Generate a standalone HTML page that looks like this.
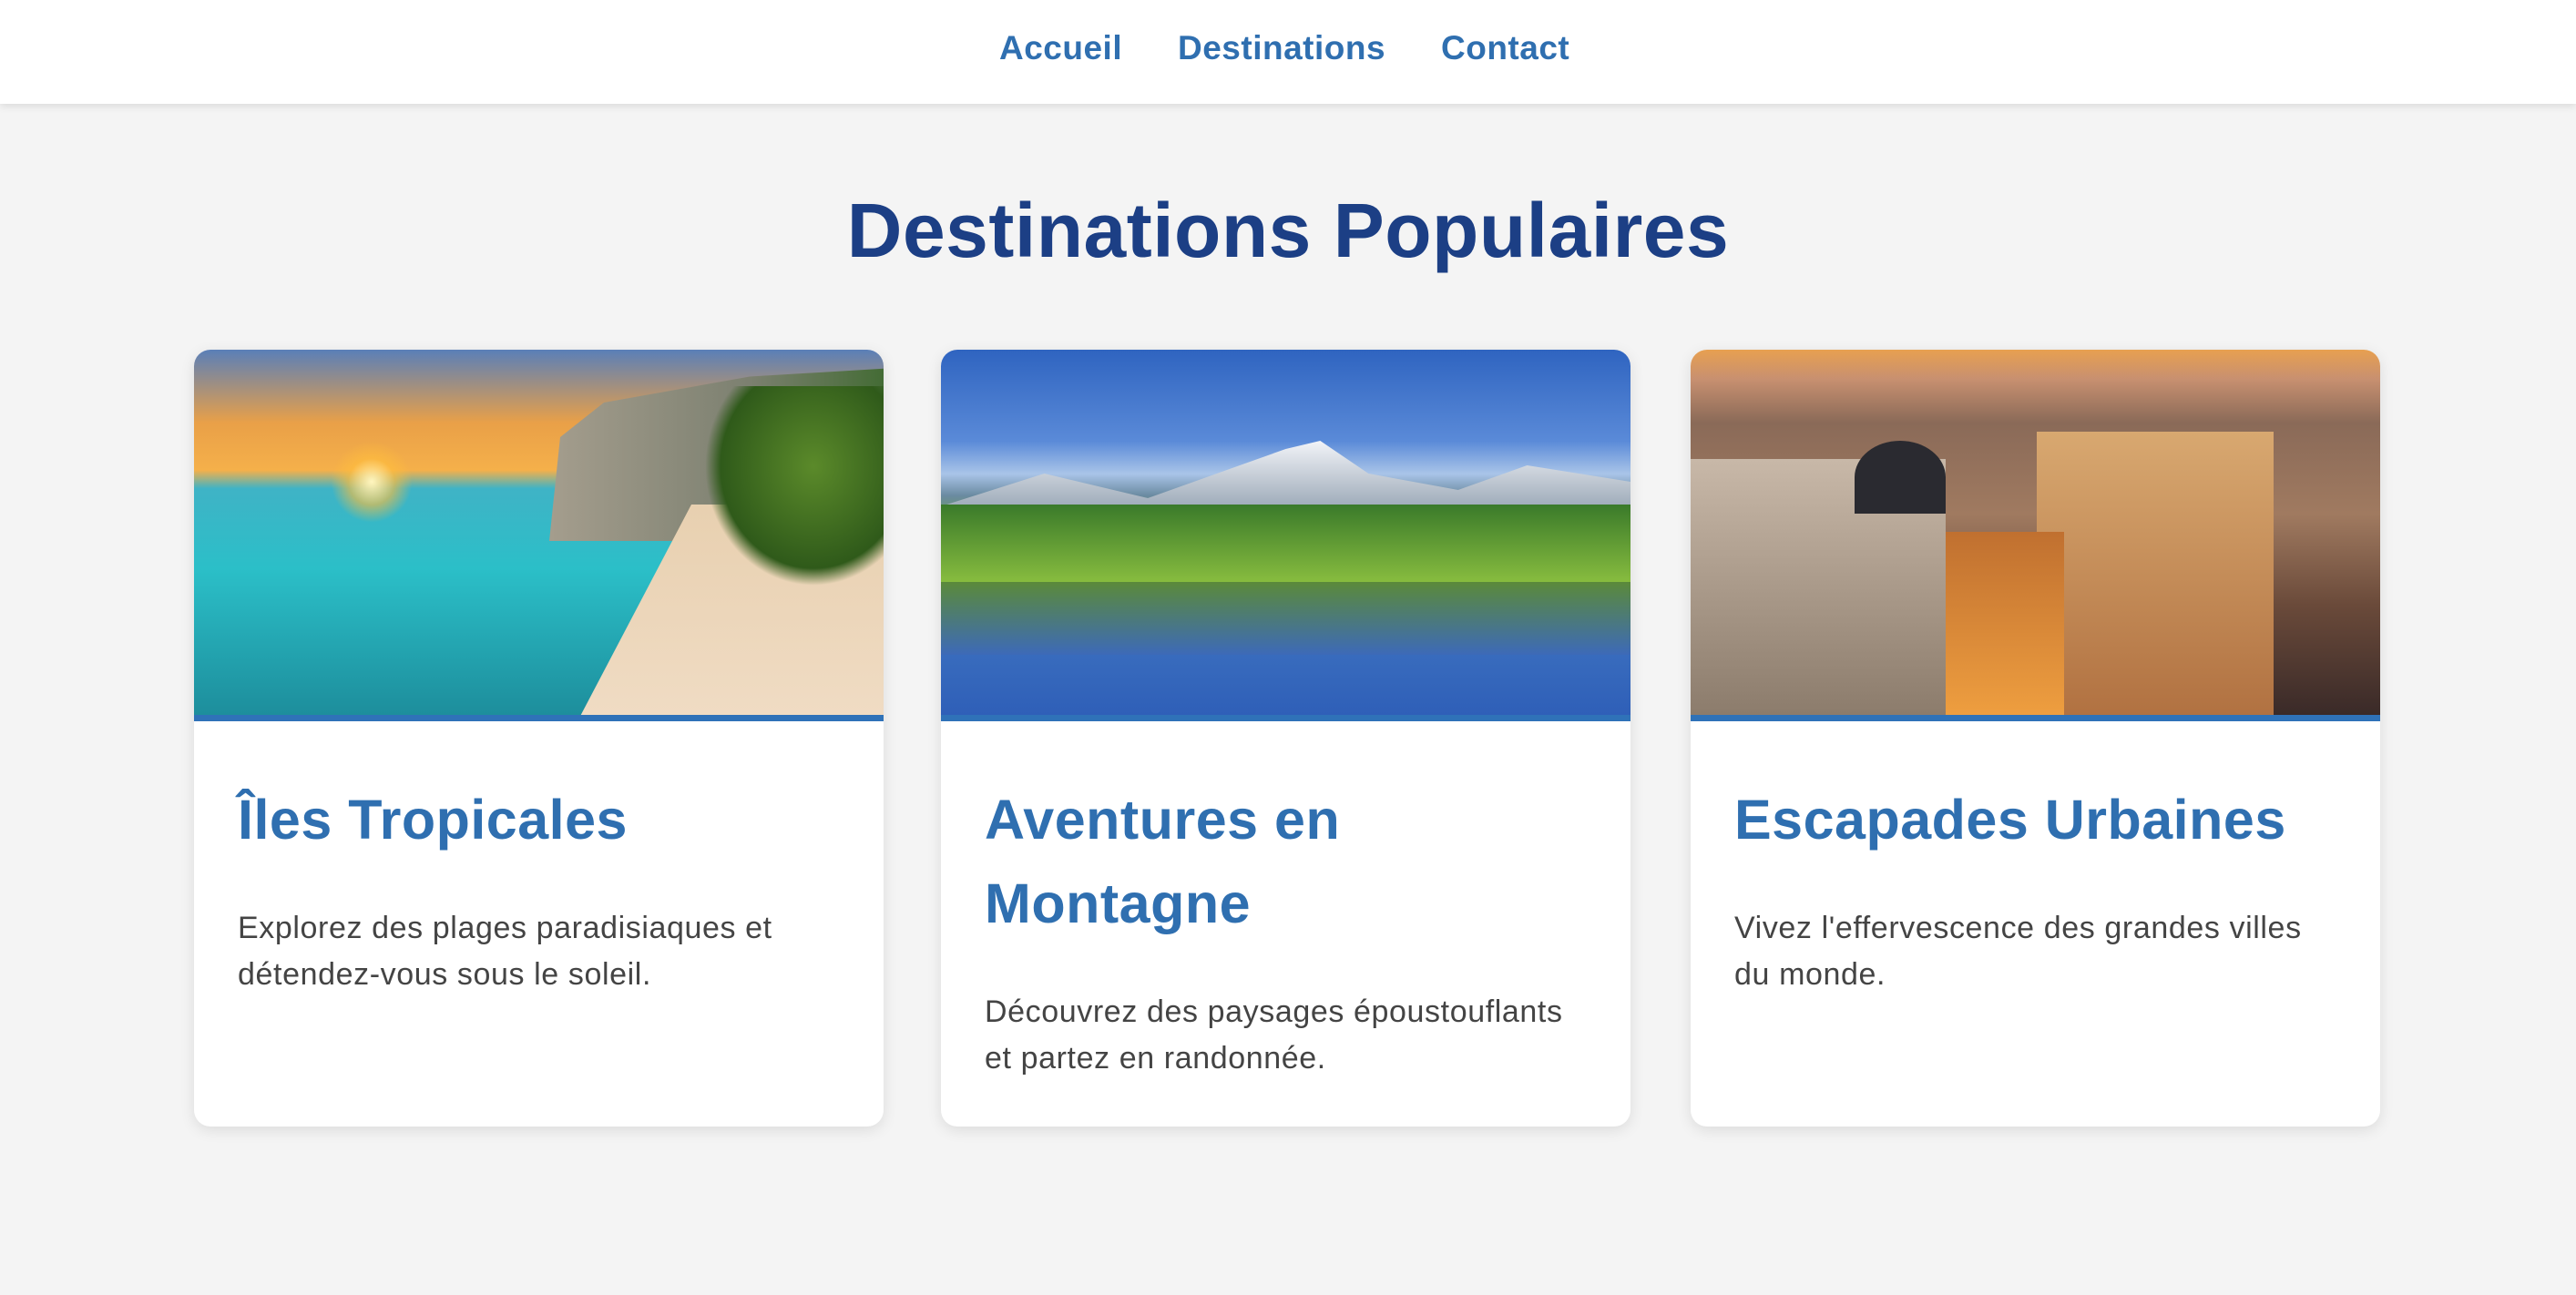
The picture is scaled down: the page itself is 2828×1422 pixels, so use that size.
<!DOCTYPE html>
<html><head><meta charset="utf-8"><style>
*{margin:0;padding:0;box-sizing:border-box}
body{width:2828px;height:1422px;background:#f4f4f4;font-family:"Liberation Sans",sans-serif;overflow:hidden;position:relative}
nav{position:absolute;left:0;top:0;width:2828px;height:114px;background:#fff;box-shadow:0 3px 8px rgba(0,0,0,.1);text-align:center}
nav a{position:absolute;top:32px;font-size:37px;font-weight:bold;color:#2f6fb0;text-decoration:none;letter-spacing:0.5px}
h1{position:absolute;top:205px;left:0;width:2828px;text-align:center;font-size:84px;font-weight:bold;color:#1c3f85;letter-spacing:0.5px}
.card{position:absolute;top:384px;width:757px;height:853px;background:#fff;border-radius:18px;overflow:hidden;box-shadow:0 4px 16px rgba(0,0,0,.1)}
.img{height:408px;border-bottom:7px solid #2f72b8;position:relative;overflow:hidden}
.card h2{position:absolute;left:48px;top:470px;width:680px;font-size:61px;line-height:92px;color:#2f6fb0;font-weight:bold;letter-spacing:0.5px}
.card p{position:absolute;left:48px;width:670px;font-size:34px;line-height:51px;color:#444;letter-spacing:0.6px}
</style></head><body>
<nav><a style="left:1097px">Accueil</a><a style="left:1293px">Destinations</a><a style="left:1582px">Contact</a></nav>
<h1>Destinations Populaires</h1>

<div class="card" style="left:213px">
 <div class="img" style="background:linear-gradient(180deg,#5a7fb8 0%,#e9a048 20%,#f5b04a 33%,#3fb3c6 38%,#2bbfc8 60%,#1d8e9c 100%)">
  <div style="position:absolute;left:370px;top:20px;width:400px;height:190px;background:linear-gradient(90deg,#a8a090,#7c8070 60%,#3f6a30);clip-path:polygon(5% 100%,8% 40%,20% 20%,60% 5%,100% 0,100% 100%)"></div>
  <div style="position:absolute;left:420px;top:170px;width:360px;height:240px;background:linear-gradient(180deg,#e8d0b0,#f0dcc4);clip-path:polygon(35% 0,100% 0,100% 100%,0 100%)"></div>
  <div style="position:absolute;left:560px;top:40px;width:200px;height:220px;background:radial-gradient(ellipse at 60% 40%,#5b8a2a,#2f5a1a 60%,transparent 70%)"></div>
  <div style="position:absolute;left:150px;top:100px;width:90px;height:90px;border-radius:50%;background:radial-gradient(#fff6c0,rgba(255,190,60,.6) 40%,transparent 70%)"></div>
 </div>
 <h2>Îles Tropicales</h2>
 <p style="top:610px">Explorez des plages paradisiaques et détendez-vous sous le soleil.</p>
</div>

<div class="card" style="left:1033px">
 <div class="img" style="background:linear-gradient(180deg,#2f64c0 0%,#5a8ad8 25%,#a9c4e8 34%,#6a8aa0 40%,#6fa83a 50%,#8cc03e 58%,#557b3a 64%,#3d72c0 75%,#2f5fb8 100%)">
  <div style="position:absolute;left:0;top:100px;width:757px;height:90px;background:linear-gradient(180deg,#f2f4f8,#8a9aaa);clip-path:polygon(0 80%,15% 40%,30% 70%,40% 40%,50% 10%,55% 0,62% 40%,75% 60%,85% 30%,100% 50%,100% 100%,0 100%)"></div>
  <div style="position:absolute;left:0;top:170px;width:757px;height:90px;background:linear-gradient(180deg,#3a7a2a,#8cc040)"></div>
  <div style="position:absolute;left:0;top:255px;width:757px;height:80px;background:linear-gradient(180deg,#5b8a3a,#3d6ab8)"></div>
 </div>
 <h2>Aventures en<br>Montagne</h2>
 <p style="top:702px">Découvrez des paysages époustouflants et partez en randonnée.</p>
</div>

<div class="card" style="left:1856px">
 <div class="img" style="background:linear-gradient(180deg,#e8a050 0%,#c89070 8%,#8a6a58 20%,#a07a60 45%,#6a4a3a 70%,#3a2a28 100%)">
  <div style="position:absolute;left:0;top:120px;width:280px;height:290px;background:linear-gradient(180deg,#c8b8a8,#8a7a6a)"></div>
  <div style="position:absolute;left:180px;top:100px;width:100px;height:80px;border-radius:50% 50% 0 0;background:#2a2a30"></div>
  <div style="position:absolute;left:380px;top:90px;width:260px;height:320px;background:linear-gradient(180deg,#d8a870,#b07040)"></div>
  <div style="position:absolute;left:280px;top:200px;width:130px;height:210px;background:linear-gradient(180deg,#c07030,#f0a040)"></div>
 </div>
 <h2>Escapades Urbaines</h2>
 <p style="top:610px">Vivez l'effervescence des grandes villes<br>du monde.</p>
</div>
</body></html>
